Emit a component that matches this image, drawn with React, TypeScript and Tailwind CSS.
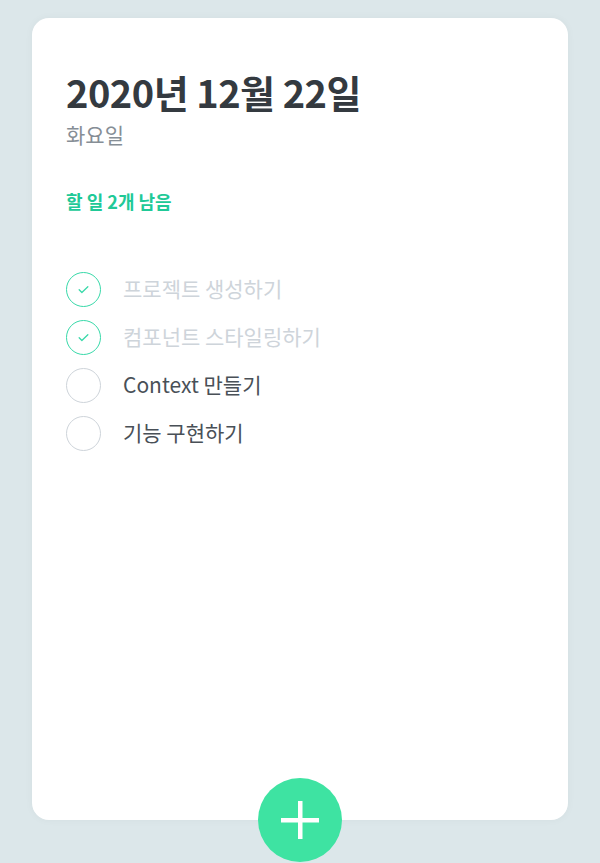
import React from "react";

const todos = [
  { text: "프로젝트 생성하기", done: true },
  { text: "컴포넌트 스타일링하기", done: true },
  { text: "Context 만들기", done: false },
  { text: "기능 구현하기", done: false },
];

export default function App() {
  return (
    <div
      className="min-h-screen bg-[#dce7ea] pt-[18px]"
      style={{ fontFamily: '"Noto Sans CJK KR", "Noto Sans", sans-serif' }}
    >
      <div className="relative mx-auto w-[536px] h-[802px] bg-white rounded-[17px] shadow-[0_0_8px_rgba(0,0,0,0.04)] flex flex-col">
        <div className="px-[34px] pt-[55px] pb-[25px]">
          <h1 className="m-0 text-[38px] leading-none font-bold text-[#343a40] tracking-[-0.5px]">
            2020년 12월 22일
          </h1>
          <div className="mt-[13px] text-[21px] leading-none text-[#868e96]">화요일</div>
          <div className="mt-[47px] text-[18px] leading-none font-bold text-[#20c997]">할 일 2개 남음</div>
        </div>
        <div className="px-[34px] pt-[30px] flex flex-col">
          {todos.map((t) => (
            <div key={t.text} className="flex items-center py-[6.5px]">
              <div
                className={
                  t.done
                    ? "w-[35px] h-[35px] rounded-full border border-[#38d9a9] flex items-center justify-center mr-[22px]"
                    : "w-[35px] h-[35px] rounded-full border border-[#ced4da] flex items-center justify-center mr-[22px]"
                }
              >
                {t.done && (
                  <svg width="13" height="13" viewBox="0 0 24 24" fill="none">
                    <path d="M4 12.5l5 5L20 7" stroke="#38d9a9" strokeWidth="2.4" strokeLinecap="round" strokeLinejoin="round" />
                  </svg>
                )}
              </div>
              <div className={t.done ? "text-[21px] text-[#ced4da]" : "text-[21px] text-[#495057]"}>{t.text}</div>
            </div>
          ))}
        </div>
        <button className="absolute left-1/2 bottom-0 -translate-x-1/2 translate-y-1/2 w-[84px] h-[84px] rounded-full bg-[#3ee3a2] flex items-center justify-center">
          <svg width="38" height="38" viewBox="0 0 38 38">
            <rect x="17" y="0" width="4.5" height="38" fill="white" />
            <rect x="0" y="17" width="38" height="4.5" fill="white" />
          </svg>
        </button>
      </div>
    </div>
  );
}
